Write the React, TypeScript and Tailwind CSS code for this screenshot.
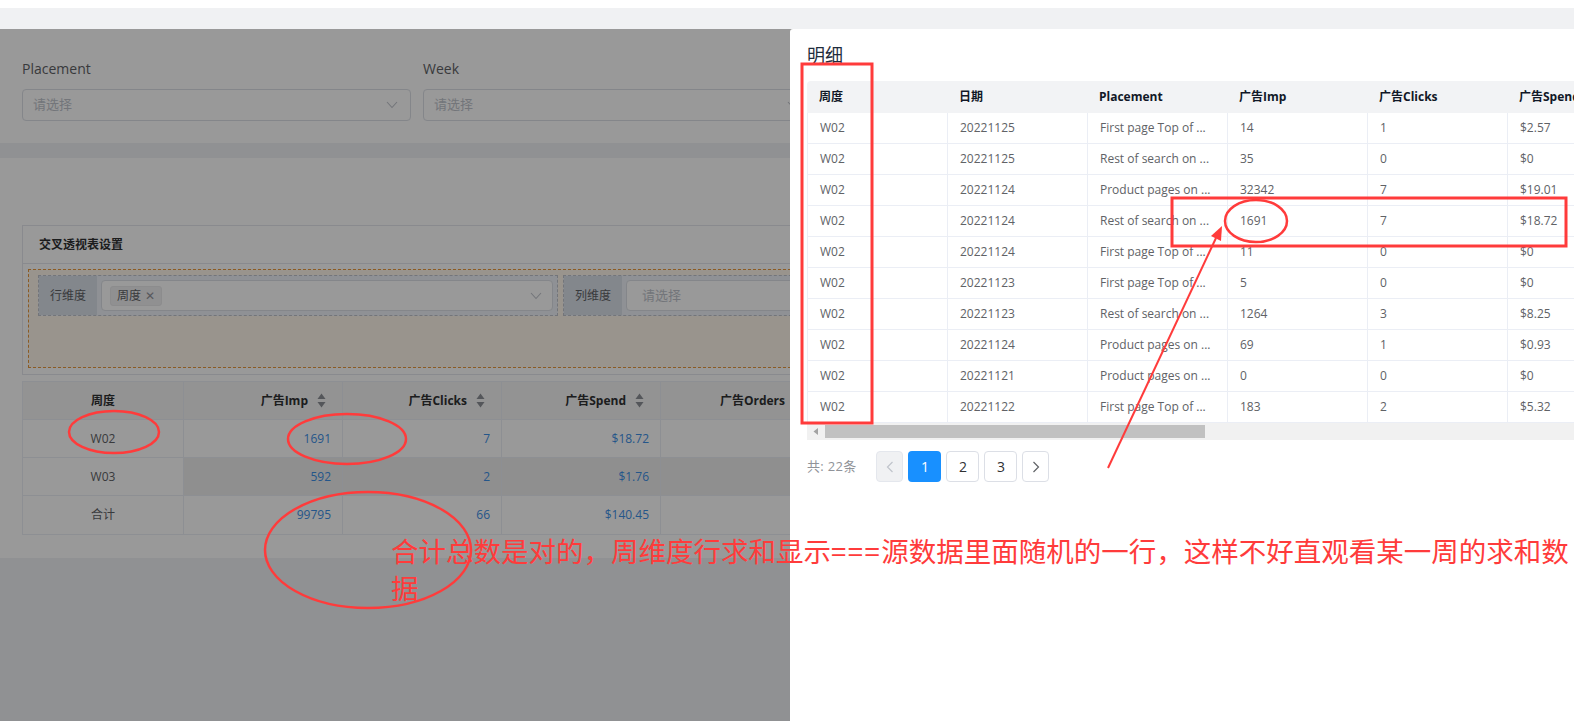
import React from "react";

const RED = "#ff3b3b";

const detailRows: string[][] = [
  ["W02", "20221125", "First page Top of ...", "14", "1", "$2.57"],
  ["W02", "20221125", "Rest of search on ...", "35", "0", "$0"],
  ["W02", "20221124", "Product pages on ...", "32342", "7", "$19.01"],
  ["W02", "20221124", "Rest of search on ...", "1691", "7", "$18.72"],
  ["W02", "20221124", "First page Top of ...", "11", "0", "$0"],
  ["W02", "20221123", "First page Top of ...", "5", "0", "$0"],
  ["W02", "20221123", "Rest of search on ...", "1264", "3", "$8.25"],
  ["W02", "20221124", "Product pages on ...", "69", "1", "$0.93"],
  ["W02", "20221121", "Product pages on ...", "0", "0", "$0"],
  ["W02", "20221122", "First page Top of ...", "183", "2", "$5.32"],
];

const detailHeaders = ["周度", "日期", "Placement", "广告Imp", "广告Clicks", "广告Spend", "广告Orders", "广告Sales"];

function Chevron({ className }: { className?: string }) {
  return (
    <svg className={className} width="12" height="8" viewBox="0 0 12 8" fill="none">
      <polyline points="1,1 6,6.5 11,1" stroke="currentColor" strokeWidth="1.1" />
    </svg>
  );
}

function SortIcon() {
  return (
    <svg width="9" height="15" viewBox="0 0 9 15">
      <polygon points="4.5,0.5 8.5,6 0.5,6" fill="#8c8f96" />
      <polygon points="4.5,14.5 8.5,9 0.5,9" fill="#8c8f96" />
    </svg>
  );
}

function Select({ placeholder }: { placeholder: string }) {
  return (
    <div className="h-[32px] rounded-[4px] border border-[#dcdfe6] bg-white flex items-center justify-between pl-[10px] pr-[12px]">
      <span className="text-[13px] text-[#c0c4cc]">{placeholder}</span>
      <Chevron className="text-[#c0c4cc]" />
    </div>
  );
}

const pivotRows = [
  { week: "W02", imp: "1691", clicks: "7", spend: "$18.72", hover: false },
  { week: "W03", imp: "592", clicks: "2", spend: "$1.76", hover: true },
  { week: "合计", imp: "99795", clicks: "66", spend: "$140.45", hover: false },
];

export default function App() {
  return (
    <div className="relative w-[1574px] h-[721px] overflow-hidden bg-white [font-family:'Open_Sans','Noto_Sans_CJK_SC',sans-serif]">
      <div className="h-[8px] bg-white" />
      <div className="h-[21px] bg-[#f0f1f3]" />
      <div className="relative h-[692px] bg-[#f0f2f5] overflow-hidden">
        {/* Card 1: filters */}
        <div className="h-[114px] bg-white px-[22px] pt-[29px]">
          <div className="flex gap-[12px]">
            {["Placement", "Week", "Date", "Country"].map((l) => (
              <div key={l} className="w-[389px] shrink-0">
                <div className="h-[22px] leading-[22px] text-[14px] text-[#606266] mb-[9px]">{l}</div>
                <Select placeholder="请选择" />
              </div>
            ))}
          </div>
        </div>

        {/* Card 2: pivot */}
        <div className="mt-[15px] h-[400px] bg-white px-[22px] pt-[67px]">
          <div className="border border-[#e4e7ed]">
            <div className="h-[38px] border-b border-[#e4e7ed] pl-[16px] flex items-center text-[12px] font-bold text-[#303133]">
              交叉透视表设置
            </div>
            <div className="pt-[5px] pl-[5px] pb-[6px]">
              <div className="h-[99px] border border-dashed border-[#e8983c] bg-[#fff7ec] pt-[5px] px-[9px] flex gap-[5px]">
                <div className="w-[520px] h-[41px] border border-dashed border-[#c0c4cc] bg-[#eef2f8] flex">
                  <div className="w-[58px] bg-[#dbe1ea] text-[12px] text-[#606266] flex items-center justify-center">行维度</div>
                  <div className="flex-1 m-[4px] h-[31px] rounded-[4px] border border-[#dcdfe6] bg-white flex items-center justify-between pl-[8px] pr-[10px]">
                    <div className="h-[20px] px-[6px] rounded-[3px] bg-[#f0f0f2] border border-[#e9e9eb] flex items-center gap-[4px] text-[12px] text-[#606266]">
                      周度
                      <span className="text-[12px] leading-none text-[#909399]">✕</span>
                    </div>
                    <Chevron className="text-[#c0c4cc]" />
                  </div>
                </div>
                <div className="w-[520px] h-[41px] border border-dashed border-[#c0c4cc] bg-[#eef2f8] flex">
                  <div className="w-[58px] bg-[#dbe1ea] text-[12px] text-[#606266] flex items-center justify-center">列维度</div>
                  <div className="flex-1 m-[4px] h-[31px] rounded-[4px] border border-[#dcdfe6] bg-white flex items-center justify-between pl-[15px] pr-[10px]">
                    <span className="text-[13px] text-[#c0c4cc]">请选择</span>
                    <Chevron className="text-[#c0c4cc]" />
                  </div>
                </div>
              </div>
            </div>
          </div>

          {/* pivot table */}
          <div className="mt-[6px] border border-[#ebeef5] text-[12px]">
            <div className="flex h-[38px] bg-[#f5f5f5] border-b border-[#ebeef5] font-bold text-[#303133]">
              <div className="w-[161px] border-r border-[#ebeef5] flex items-center justify-center">周度</div>
              {["广告Imp", "广告Clicks", "广告Spend"].map((h) => (
                <div key={h} className="w-[159px] border-r border-[#ebeef5] flex items-center justify-end gap-[9px] pr-[16px]">
                  <span>{h}</span>
                  <SortIcon />
                </div>
              ))}
              <div className="w-[159px] border-r border-[#ebeef5] flex items-center justify-end gap-[9px] pr-[16px]">
                <span>广告Orders</span>
                <SortIcon />
              </div>
              <div className="flex-1" />
            </div>
            {pivotRows.map((r, i) => (
              <div key={r.week} className={`flex h-[38px] ${i < 2 ? "border-b border-[#ebeef5]" : ""}`}>
                <div className="w-[161px] border-r border-[#ebeef5] bg-white flex items-center justify-center text-[#606266]">{r.week}</div>
                <div className={`flex-1 flex ${r.hover ? "bg-[#efefef]" : "bg-white"} text-[#3d8fe6]`}>
                  <div className="w-[159px] border-r border-[#ebeef5] flex items-center justify-end pr-[11px]">{r.imp}</div>
                  <div className="w-[159px] border-r border-[#ebeef5] flex items-center justify-end pr-[11px]">{r.clicks}</div>
                  <div className="w-[159px] border-r border-[#ebeef5] flex items-center justify-end pr-[11px]">{r.spend}</div>
                  <div className="w-[159px] border-r border-[#ebeef5]" />
                  <div className="flex-1" />
                </div>
              </div>
            ))}
          </div>
        </div>

        {/* mask */}
        <div className="absolute inset-0 bg-black/40" />

        {/* drawer */}
        <div className="absolute top-0 left-[790px] right-0 bottom-0 bg-white rounded-tl-[3px] pl-[17px] overflow-hidden">
          <div className="mt-[14px] leading-[24px] text-[18px] text-[#1f2d3d]">明细</div>
          <div className="mt-[14px] w-[1120px]">
            <div className="flex h-[32px] bg-[#f2f3f5] rounded-t-[4px] text-[12px] font-bold text-[#111827]">
              {detailHeaders.map((h) => (
                <div key={h} className="w-[140px] shrink-0 px-[12px] flex items-center">{h}</div>
              ))}
            </div>
            {detailRows.map((r, i) => (
              <div key={i} className="flex h-[31px] border-b border-[#ebeef5] border-l text-[12px] text-[#606266]">
                {r.map((c, j) => (
                  <div key={j} className="w-[140px] shrink-0 px-[12px] border-r border-[#ebeef5] flex items-center whitespace-nowrap">
                    {c}
                  </div>
                ))}
                <div className="w-[140px] shrink-0 border-r border-[#ebeef5]" />
                <div className="w-[140px] shrink-0" />
              </div>
            ))}
            <div className="relative h-[17px] bg-[#f1f1f1]">
              <svg className="absolute left-[6px] top-[5px]" width="6" height="7" viewBox="0 0 6 7">
                <polygon points="5,0 5,7 0.5,3.5" fill="#a3a3a3" />
              </svg>
              <div className="absolute left-[18px] top-[2px] h-[13px] w-[380px] bg-[#c1c1c1]" />
            </div>
          </div>
          <div className="mt-[11px] h-[31px] flex items-center">
            <span className="text-[13px] text-[#909399] mr-[20px] tracking-[0.3px]">共: 22条</span>
            <div className="flex gap-[5px]">
              <div className="w-[27px] h-[31px] rounded-[4px] border border-[#e4e7ed] bg-[#f0f1f3] flex items-center justify-center text-[#c0c4cc]">
                <svg width="8" height="12" viewBox="0 0 8 12" fill="none"><polyline points="6.5,1 1.5,6 6.5,11" stroke="currentColor" strokeWidth="1.2" /></svg>
              </div>
              <div className="w-[33px] h-[31px] rounded-[4px] bg-[#1890ff] text-white text-[14px] flex items-center justify-center">1</div>
              <div className="w-[33px] h-[31px] rounded-[4px] border border-[#dcdfe6] bg-white text-[#303133] text-[14px] flex items-center justify-center">2</div>
              <div className="w-[33px] h-[31px] rounded-[4px] border border-[#dcdfe6] bg-white text-[#303133] text-[14px] flex items-center justify-center">3</div>
              <div className="w-[27px] h-[31px] rounded-[4px] border border-[#dcdfe6] bg-white flex items-center justify-center text-[#606266]">
                <svg width="8" height="12" viewBox="0 0 8 12" fill="none"><polyline points="1.5,1 6.5,6 1.5,11" stroke="currentColor" strokeWidth="1.2" /></svg>
              </div>
            </div>
          </div>
        </div>
      </div>

      {/* annotations */}
      <svg className="absolute left-0 top-0 pointer-events-none" width="1574" height="721" viewBox="0 0 1574 721" fill="none">
        <rect x="802" y="64" width="70" height="359" stroke={RED} strokeWidth="3" />
        <rect x="1172" y="198" width="394" height="48" stroke={RED} strokeWidth="3" />
        <ellipse cx="1256" cy="221" rx="31" ry="21" stroke={RED} strokeWidth="2.5" />
        <ellipse cx="114" cy="432" rx="45" ry="21" stroke={RED} strokeWidth="2.5" />
        <ellipse cx="347" cy="439" rx="59" ry="25" stroke={RED} strokeWidth="2.5" />
        <ellipse cx="368" cy="550" rx="103" ry="58" stroke={RED} strokeWidth="2.5" />
        <line x1="1108" y1="468" x2="1216" y2="238" stroke={RED} strokeWidth="2" />
        <polygon points="1222,226 1221,241 1211,236" fill={RED} />
      </svg>
      <div className="absolute left-[391px] top-[532px] text-[27.5px] leading-[37px] [font-family:'Noto_Sans_CJK_SC',sans-serif] text-[#ff3b3b] pointer-events-none">
        <div className="whitespace-nowrap">合计总数是对的，周维度行求和显示<span className="tracking-[1.5px]">===</span>源数据里面随机的一行，这样不好直观看某一周的求和数</div>
        <div>据</div>
      </div>
    </div>
  );
}
